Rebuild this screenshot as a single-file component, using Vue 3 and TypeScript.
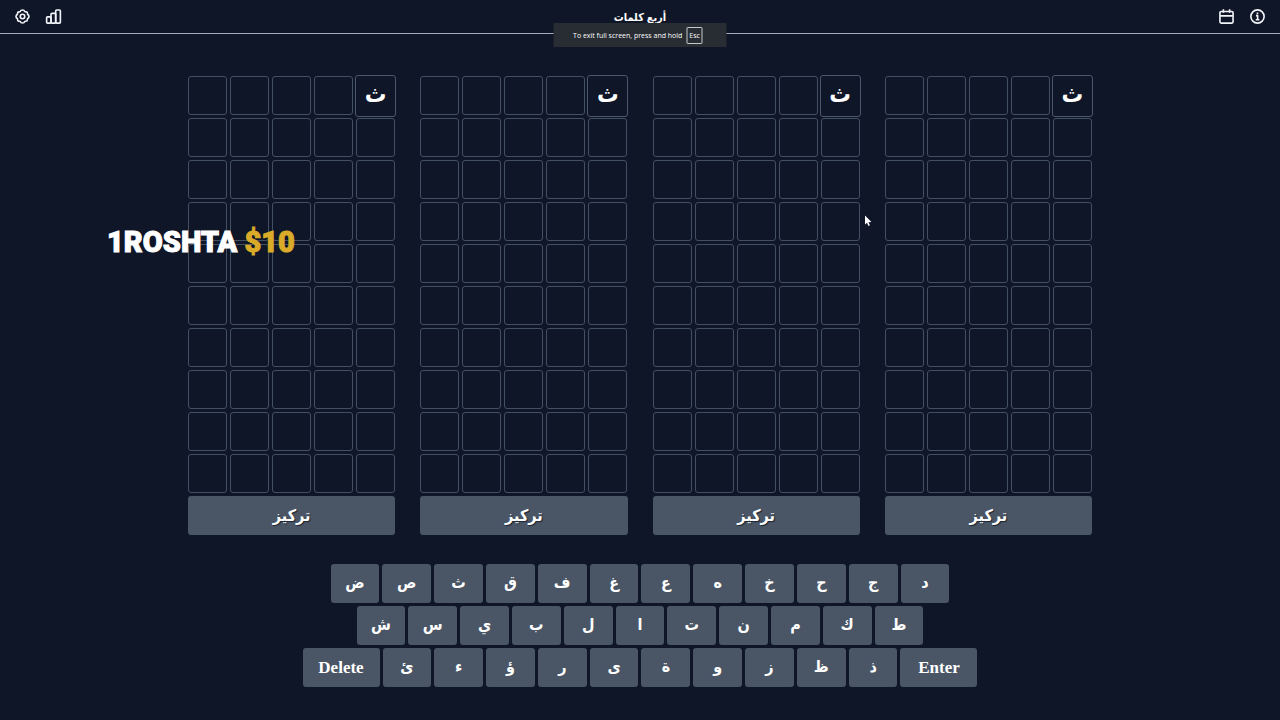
<script setup lang="ts">
import { ref } from 'vue'

const boards = [0, 1, 2, 3]
const rows = 10
const columns = 5
const current = ref('ث')

interface KeyRow {
  name: string
  keys: string[]
}

const keyboard: KeyRow[] = [
  { name: 'top', keys: ['ض', 'ص', 'ث', 'ق', 'ف', 'غ', 'ع', 'ه', 'خ', 'ح', 'ج', 'د'] },
  { name: 'middle', keys: ['ش', 'س', 'ي', 'ب', 'ل', 'ا', 'ت', 'ن', 'م', 'ك', 'ط'] },
  { name: 'bottom', keys: ['Delete', 'ئ', 'ء', 'ؤ', 'ر', 'ى', 'ة', 'و', 'ز', 'ظ', 'ذ', 'Enter'] },
]

const isActive = (n: number): boolean => n === columns
</script>

<template>
  <div class="page">
    <header class="header">
      <div class="tools">
        <button class="icon" aria-label="Settings">
          <svg viewBox="0 0 24 24">
            <path d="M9.6 2.2 Q12 1 14.4 2.2 Q15 4.6 17.2 4.6 Q19.8 4.4 20 7 Q19.6 9.2 21.8 9.8 Q23 12 21.8 14.2 Q19.6 14.8 19.8 17 Q19.8 19.6 17.2 19.6 Q15 19.4 14.4 21.8 Q12 23 9.6 21.8 Q9 19.4 6.8 19.6 Q4.2 19.6 4.2 17 Q4.4 14.8 2.2 14.2 Q1 12 2.2 9.8 Q4.4 9.2 4 7 Q4.2 4.4 6.8 4.6 Q9 4.6 9.6 2.2 Z" />
            <circle cx="12" cy="12" r="3.6" />
          </svg>
        </button>
        <button class="icon" aria-label="Statistics">
          <svg viewBox="0 0 24 24">
            <rect x="1" y="12.5" width="7" height="10" rx="1.5" />
            <rect x="8" y="7" width="7.5" height="15.5" rx="1.5" />
            <rect x="15.5" y="1.5" width="7.5" height="21" rx="1.5" />
          </svg>
        </button>
      </div>
      <h1 class="title" dir="rtl">أربع كلمات</h1>
      <div class="tools end">
        <button class="icon" aria-label="Calendar">
          <svg viewBox="0 0 24 24">
            <rect x="1.5" y="4" width="21" height="18.5" rx="2" />
            <path d="M2 11H22M7 0.5V6M17 0.5V6" />
          </svg>
        </button>
        <button class="icon" aria-label="Information">
          <svg viewBox="0 0 24 24">
            <circle cx="12" cy="12" r="10.6" />
            <path d="M9.6 10.6H12.2V17M9.2 17.2H15M12 5.4V8.2" />
          </svg>
        </button>
      </div>
    </header>

    <div class="toast">To exit full screen, press and hold <kbd>Esc</kbd></div>

    <main>
      <div class="boards">
        <section v-for="b in boards" :key="b" class="board">
          <div class="grid">
            <div v-for="n in rows * columns" :key="n" class="cell" :class="{ active: isActive(n) }">
              <template v-if="isActive(n)">{{ current }}</template>
            </div>
          </div>
          <button class="focus" dir="rtl">تركيز</button>
        </section>
      </div>

      <div class="keyboard">
        <div v-for="row in keyboard" :key="row.name" class="keys" :class="row.name">
          <button v-for="k in row.keys" :key="k" class="key" :class="{ wide: k.length > 1 }">{{ k }}</button>
        </div>
      </div>
    </main>

    <div class="donor">1ROSHTA <span class="amount">$10</span></div>

    <svg class="pointer" viewBox="0 0 8 12" aria-hidden="true">
      <path d="M1 0.5 L1 9.5 L3 7.7 L4.4 11 L5.9 10.3 L4.5 7.2 L7.4 7 Z" />
    </svg>
  </div>
</template>

<style>
body {
  margin: 0;
  background: #0f1628;
}
</style>

<style scoped>
.page {
  position: relative;
  box-sizing: border-box;
  min-height: 100vh;
  overflow: hidden;
  background: #0f1628;
  color: #fff;
  font-family: "Liberation Serif", "DejaVu Sans Condensed", "DejaVu Sans", serif;
}
button {
  margin: 0;
  padding: 0;
  border: 0;
  color: inherit;
  font-family: inherit;
  font-weight: bold;
  cursor: pointer;
}
.header {
  display: grid;
  grid-template-columns: 1fr auto 1fr;
  align-items: center;
  box-sizing: border-box;
  height: 34px;
  padding: 0 15px;
  border-bottom: 1px solid #a5abb7;
}
.tools {
  display: flex;
  gap: 16px;
}
.end {
  justify-content: flex-end;
}
.icon {
  width: 15px;
  height: 15px;
  background: none;
}
.icon svg {
  display: block;
  width: 100%;
  height: 100%;
  fill: none;
  stroke: #f1f4f8;
  stroke-width: 2.6;
  stroke-linejoin: round;
  overflow: visible;
}
.title {
  margin: 0;
  font-size: 11px;
  line-height: 16px;
}
.toast {
  position: absolute;
  z-index: 2;
  top: 23px;
  left: 50%;
  transform: translateX(-50%);
  display: flex;
  align-items: center;
  justify-content: center;
  gap: 4px;
  box-sizing: border-box;
  width: 173px;
  height: 24px;
  padding-right: 4px;
  background: #272d33;
  font: 7px "Open Sans", "Noto Sans", sans-serif;
  white-space: nowrap;
}
kbd {
  padding: 3px 2px;
  border: 1px solid #c6c9cc;
  border-radius: 1px;
  font: inherit;
}
.boards {
  display: grid;
  grid-template-columns: repeat(4, 1fr);
  gap: 25px;
  max-width: 904px;
  margin: 42px auto 0;
}
.board,
.keyboard {
  display: flex;
  flex-direction: column;
  gap: 3px;
}
.grid {
  display: grid;
  grid-template-columns: repeat(5, 1fr);
  grid-auto-rows: 39px;
  gap: 3px;
}
.cell {
  display: flex;
  align-items: center;
  justify-content: center;
  box-sizing: border-box;
  border: 1px solid #435061;
  border-radius: 3px;
  font-size: 24px;
  font-weight: bold;
  line-height: 28px;
}
.active {
  margin: -1px -1px -2px;
  padding-bottom: 4px;
  border-color: #4a5768;
}
.focus,
.key {
  height: 39px;
  border-radius: 3px;
  background: #4a5666;
}
.focus {
  font-size: 16px;
  text-shadow: 1px 1px 1px #1b2432;
}
.keyboard {
  align-items: center;
  margin-top: 29px;
}
.keys {
  display: flex;
  gap: 3px;
  width: 100%;
}
.top {
  max-width: 619px;
}
.middle {
  max-width: 567px;
}
.bottom {
  max-width: 675px;
}
.key {
  flex: 1 1 0;
  min-width: 0;
  padding-bottom: 2px;
  font-size: 16px;
}
.wide {
  flex: 0 0 77px;
  padding-bottom: 0;
  font-size: 17px;
}
.donor {
  position: absolute;
  top: 222px;
  left: 107px;
  font: 900 29px/40px Roboto, sans-serif;
  white-space: nowrap;
  -webkit-text-stroke: 1px currentColor;
}
.amount {
  color: #d9ab29;
}
.pointer {
  position: absolute;
  top: 215px;
  left: 864px;
  width: 8px;
  height: 12px;
  fill: #fff;
}
</style>
